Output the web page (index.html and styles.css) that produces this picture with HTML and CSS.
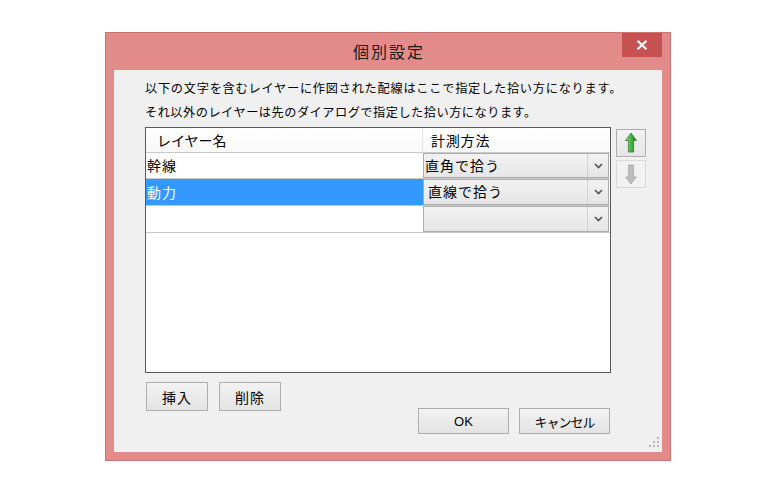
FILE: index.html
```html
<!DOCTYPE html>
<html lang="ja">
<head>
<meta charset="utf-8">
<title>個別設定</title>
<link rel="stylesheet" href="styles.css">
</head>
<body>
<div class="window">
  <div class="titlebar">
    <span></span>
    <div class="title">個別設定</div>
    <button class="close" aria-label="閉じる">
      <svg width="12" height="10" viewBox="0 0 12 10"><path d="M1.5 0.8 L10.5 9.2 M10.5 0.8 L1.5 9.2" stroke="#fff" stroke-width="2.2" fill="none"/></svg>
    </button>
  </div>
  <div class="client">
    <div class="intro">
      <p class="intro-1">以下の文字を含むレイヤーに作図された配線はここで指定した拾い方になります。</p>
      <p class="intro-2">それ以外のレイヤーは先のダイアログで指定した拾い方になります。</p>
    </div>
    <div class="grid-area">
      <div class="grid">
        <div class="grid-head">
          <div class="hcell hcell-name">レイヤー名</div>
          <div class="hcell hcell-method">計測方法</div>
        </div>
        <div class="grid-row">
          <div class="cell">幹線</div>
          <div class="cell combo-cell">
            <div class="combo"><span class="combo-text">直角で拾う</span><span class="combo-btn"><svg width="9" height="6" viewBox="0 0 9 6"><path d="M1 1 L4.5 4.5 L8 1" stroke="#555" stroke-width="1.7" fill="none"/></svg></span></div>
          </div>
        </div>
        <div class="grid-row row-tall">
          <div class="cell selected">動力</div>
          <div class="cell combo-cell">
            <div class="combo"><span class="combo-text editing">直線で拾う</span><span class="combo-btn"><svg width="9" height="6" viewBox="0 0 9 6"><path d="M1 1 L4.5 4.5 L8 1" stroke="#555" stroke-width="1.7" fill="none"/></svg></span></div>
          </div>
        </div>
        <div class="grid-row row-tall">
          <div class="cell"></div>
          <div class="cell combo-cell">
            <div class="combo"><span class="combo-text"></span><span class="combo-btn"><svg width="9" height="6" viewBox="0 0 9 6"><path d="M1 1 L4.5 4.5 L8 1" stroke="#555" stroke-width="1.7" fill="none"/></svg></span></div>
          </div>
        </div>
      </div>
      <div class="move-buttons">
        <button class="move" aria-label="上へ">
          <svg width="28" height="26" viewBox="0 0 28 26">
            <defs>
              <linearGradient id="gup" x1="0" y1="0" x2="1" y2="0">
                <stop offset="0" stop-color="#9ee39e"/>
                <stop offset="0.45" stop-color="#4fb84f"/>
                <stop offset="1" stop-color="#237a23"/>
              </linearGradient>
            </defs>
            <path d="M14 3 L19.5 10.5 L16.6 10.5 L16.6 22 L11.4 22 L11.4 10.5 L8.5 10.5 Z" fill="url(#gup)" stroke="#2f7f2f" stroke-width="0.8"/>
          </svg>
        </button>
        <button class="move disabled" aria-label="下へ">
          <svg width="28" height="26" viewBox="0 0 28 26">
            <path d="M11.4 4 L16.6 4 L16.6 16 L19.5 16 L14 23 L8.5 16 L11.4 16 Z" fill="#bdbdbd" stroke="#a8a8a8" stroke-width="0.8"/>
          </svg>
        </button>
      </div>
    </div>
    <div class="bottom">
      <div class="btn-group">
        <button class="btn btn-edit">挿入</button>
        <button class="btn btn-edit">削除</button>
      </div>
      <div class="btn-group dialog-buttons">
        <button class="btn btn-dialog latin">OK</button>
        <button class="btn btn-dialog kana">キャンセル</button>
      </div>
    </div>
    <svg class="grip" width="12" height="12" viewBox="0 0 12 12">
      <rect x="9" y="1" width="2" height="2" fill="#b8b8b8"/>
      <rect x="5" y="5" width="2" height="2" fill="#b8b8b8"/>
      <rect x="9" y="5" width="2" height="2" fill="#b8b8b8"/>
      <rect x="1" y="9" width="2" height="2" fill="#b8b8b8"/>
      <rect x="5" y="9" width="2" height="2" fill="#b8b8b8"/>
      <rect x="9" y="9" width="2" height="2" fill="#b8b8b8"/>
    </svg>
  </div>
</div>
</body>
</html>
```

FILE: styles.css
```css
html, body {
  margin: 0;
  padding: 0;
  background: #ffffff;
}

body {
  width: 779px;
  height: 493px;
  overflow: hidden;
  font-family: "Noto Sans CJK JP", "Noto Sans", sans-serif;
  color: #000;
}

.window {
  margin: 32px 0 0 105px;
  width: 566px;
  box-sizing: border-box;
  border: 1px solid #c97373;
  background: #e38b8b;
  padding: 0 8px 8px;
}

.titlebar {
  height: 37px;
  display: grid;
  grid-template-columns: 1fr auto 1fr;
  align-items: start;
}

.title {
  font-size: 16px;
  letter-spacing: 2px;
  line-height: 37px;
  color: #1a1a1a;
  padding-left: 2px;
}

.close {
  justify-self: end;
  width: 40px;
  height: 24px;
  border: none;
  padding: 0;
  margin: 0;
  background: #c75050;
  display: flex;
  align-items: center;
  justify-content: center;
}

.client {
  position: relative;
  height: 382px;
  background: #f0f0f0;
  padding: 6px 0 0 31px;
  box-sizing: border-box;
  display: flex;
  flex-direction: column;
}

.intro p {
  margin: 0;
  font-size: 12.2px;
  line-height: 24px;
  white-space: nowrap;
}

.intro-1 {
  letter-spacing: 0.75px;
}

.intro-2 {
  letter-spacing: 0.5px;
}

.grid-area {
  margin-top: 3px;
  display: flex;
  align-items: flex-start;
  gap: 5px;
}

.grid {
  width: 466px;
  height: 246px;
  box-sizing: border-box;
  border: 1px solid #5a5a5a;
  background: #ffffff;
  font-size: 14px;
}

.grid-head {
  display: grid;
  grid-template-columns: 277px 1fr;
  height: 25px;
  box-sizing: border-box;
  border-bottom: 1px solid #c9c9c9;
}

.hcell {
  line-height: 24px;
  background: linear-gradient(#ffffff, #f8f8f8);
}

.hcell-name {
  padding-left: 11px;
  border-right: 1px solid #e2e2e2;
}

.hcell-method {
  padding-left: 8px;
  letter-spacing: 0.8px;
}

.grid-row {
  display: grid;
  grid-template-columns: 277px 1fr;
  height: 26px;
  box-sizing: border-box;
  border-bottom: 1px solid #c9c9c9;
}

.grid-row.row-tall {
  height: 27px;
}

.cell {
  line-height: 25px;
  padding-left: 1px;
  letter-spacing: 1px;
  white-space: nowrap;
}

.row-tall .cell {
  line-height: 26px;
}

.cell.selected {
  background: #3399ff;
  color: #ffffff;
}

.combo-cell {
  padding: 0 1px 0 0;
}

.combo {
  height: 100%;
  box-sizing: border-box;
  border: 1px solid #adadad;
  background: linear-gradient(#f2f2f2, #e6e6e6);
  display: flex;
}

.combo-text {
  flex: 1;
  line-height: 23px;
  padding-left: 1px;
  letter-spacing: 1px;
}

.combo-text.editing {
  padding-left: 4px;
}

.combo-btn {
  width: 20px;
  border-left: 1px solid #d2d2d2;
  display: flex;
  align-items: center;
  justify-content: center;
}

.move-buttons {
  margin-top: 2px;
  display: flex;
  flex-direction: column;
  gap: 3px;
}

.move {
  width: 30px;
  height: 28px;
  box-sizing: border-box;
  padding: 0;
  border: 1px solid #adadad;
  background: linear-gradient(#f3f3f3, #e6e6e6);
  display: flex;
  align-items: center;
  justify-content: center;
}

.move.disabled {
  border-color: #d9d9d9;
  background: #f2f2f2;
}

.bottom {
  margin-top: 9px;
  display: flex;
  align-items: flex-start;
  justify-content: space-between;
  padding-right: 52px;
}

.btn-group {
  display: flex;
  gap: 11px;
}

.dialog-buttons {
  margin-top: 26px;
  gap: 10px;
}

.btn {
  box-sizing: border-box;
  padding: 0;
  border: 1px solid #adadad;
  background: linear-gradient(#f2f2f2, #e4e4e4);
  font-family: "Noto Sans CJK JP", "Noto Sans", sans-serif;
  color: #000;
}

.btn-edit {
  width: 62px;
  height: 29px;
  font-size: 14px;
  letter-spacing: 1px;
  margin-left: 1px;
}

.btn-edit + .btn-edit {
  margin-left: 0;
}

.btn-dialog {
  width: 91px;
  height: 26px;
  font-size: 13px;
}

.btn-dialog.latin {
  font-family: "Liberation Sans", "Noto Sans", sans-serif;
}

.btn-dialog.kana {
  letter-spacing: -1px;
}

.grip {
  position: absolute;
  right: 2px;
  bottom: 4px;
}
```
